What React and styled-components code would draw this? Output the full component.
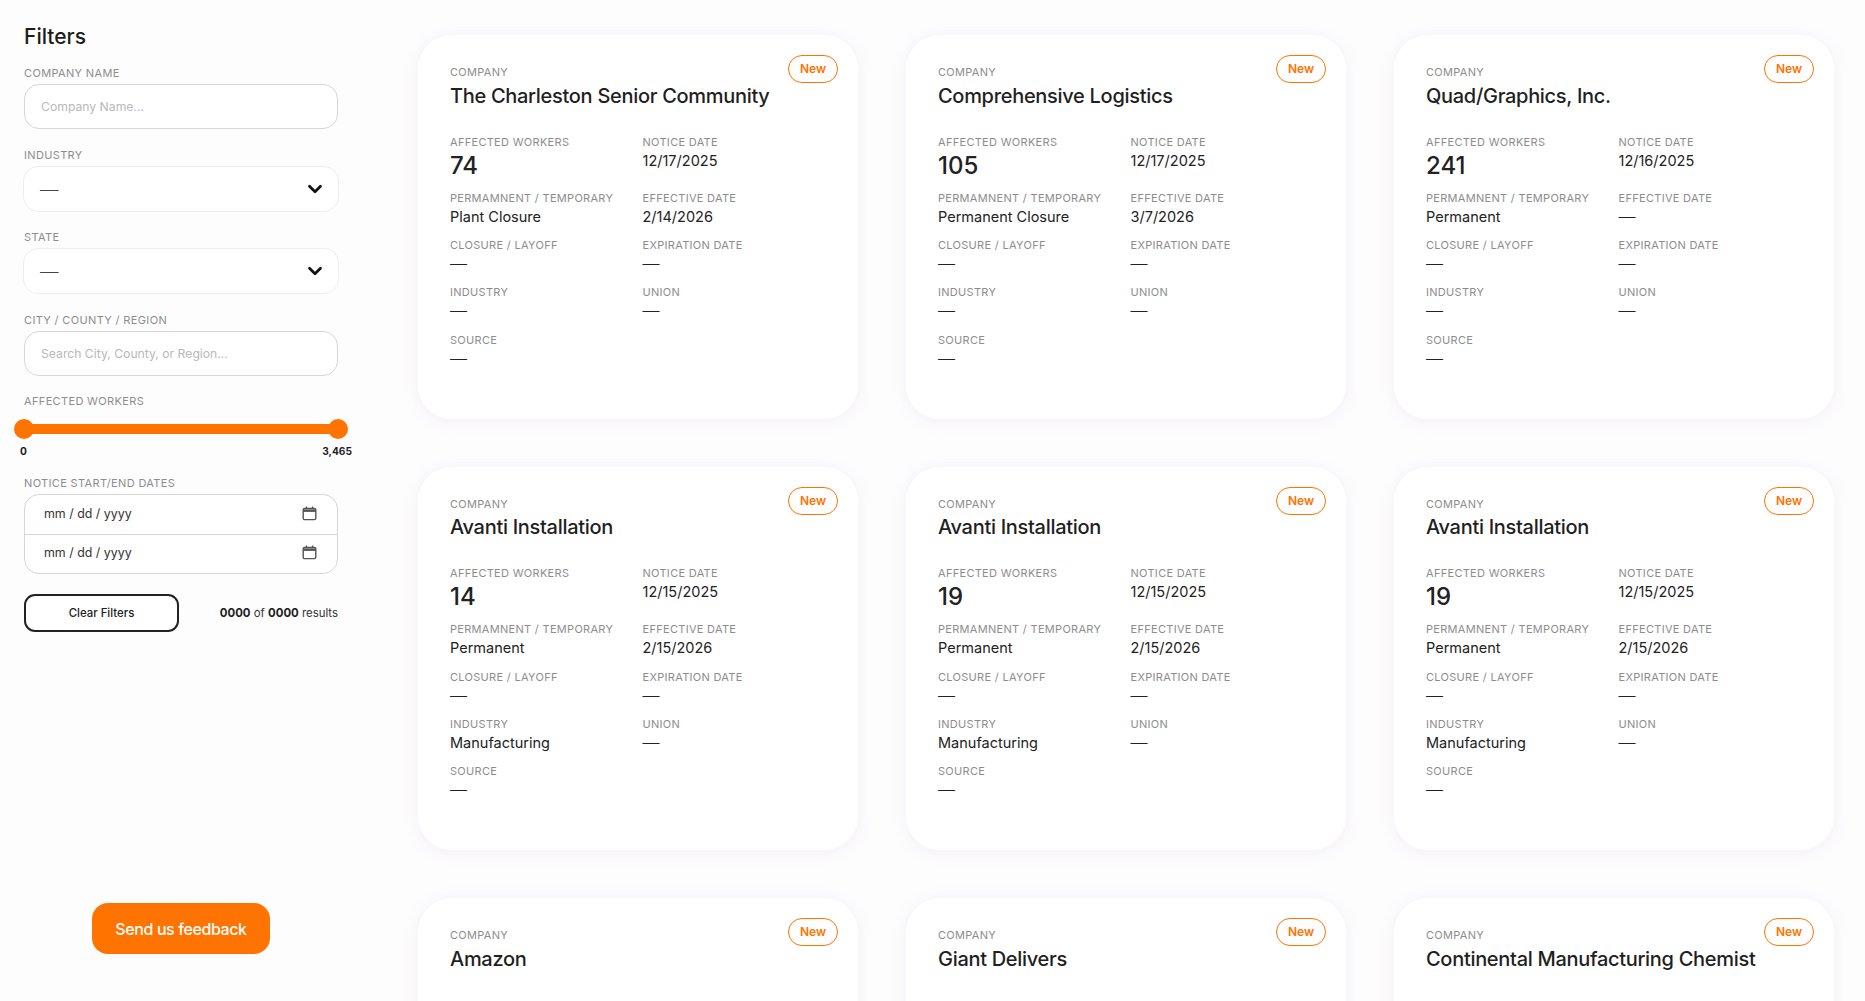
import React from "react";
import styled, { createGlobalStyle } from "styled-components";
import { ChevronDown } from "lucide-react";

const FONT = `Inter, "Noto Sans", sans-serif`;
const ORANGE = "#ff7300";

const jobs = [
  { company: "The Charleston Senior Community", workers: "74", notice: "12/17/2025", type: "Plant Closure", effective: "2/14/2026" },
  { company: "Comprehensive Logistics", workers: "105", notice: "12/17/2025", type: "Permanent Closure", effective: "3/7/2026" },
  { company: "Quad/Graphics, Inc.", workers: "241", notice: "12/16/2025", type: "Permanent" },
  { company: "Avanti Installation", workers: "14", notice: "12/15/2025", type: "Permanent", effective: "2/15/2026", industry: "Manufacturing" },
  { company: "Avanti Installation", workers: "19", notice: "12/15/2025", type: "Permanent", effective: "2/15/2026", industry: "Manufacturing" },
  { company: "Avanti Installation", workers: "19", notice: "12/15/2025", type: "Permanent", effective: "2/15/2026", industry: "Manufacturing" },
  { company: "Amazon" },
  { company: "Giant Delivers" },
  { company: "Continental Manufacturing Chemist" },
];

const GlobalStyle = createGlobalStyle`
  html, body { margin: 0; padding: 0; background: #fefdfe; }
  body { font-family: ${FONT}; color: #222; }
  * { box-sizing: border-box; }
`;

const Page = styled.div`
  display: flex;
  height: 100vh;
  overflow: hidden;
`;

const Sidebar = styled.aside`
  flex: 0 0 418px;
  display: flex;
  flex-direction: column;
  padding: 22px 80px 47px 24px;
`;

const Heading = styled.h2`
  margin: 0 0 13px;
  font-size: 21px;
  line-height: 30px;
  font-weight: 500;
  color: #1c1c1c;
`;

const FilterLabel = styled.label`
  display: block;
  height: 16px;
  margin-bottom: 3px;
  font-size: 11px;
  line-height: 16px;
  letter-spacing: 0.35px;
  text-transform: uppercase;
  color: #8d8d8d;
`;

const FilterGroup = styled.div`
  margin-bottom: ${(p) => p.$gap || "17.5px"};
`;

const TextInput = styled.input`
  display: block;
  width: 100%;
  height: 45px;
  padding: 0 16px;
  border: 1px solid #d6d5d8;
  border-radius: 15px;
  background: #fff;
  font-family: ${FONT};
  font-size: 12.2px;
  outline: none;
  &::placeholder { color: #b9b8bc; }
`;

const SelectBox = styled.div`
  display: flex;
  align-items: center;
  justify-content: space-between;
  height: 46px;
  margin: 0 -1px;
  padding: 0 12px 0 16px;
  border: 1px solid #efedf1;
  border-radius: 15px;
  background: #fff;
  color: #444;
`;

const Dash = styled.span`
  font-size: ${(p) => p.$size || "17px"};
  font-weight: 300;
`;

const SliderTrack = styled.div`
  position: relative;
  height: 10px;
  margin-top: 15px;
  border-radius: 5px;
  background: ${ORANGE};
`;

const SliderThumb = styled.span`
  position: absolute;
  top: -5px;
  ${(p) => (p.$end ? "right: -10px;" : "left: -10px;")}
  width: 20px;
  height: 20px;
  border-radius: 50%;
  background: ${ORANGE};
`;

const SliderValues = styled.div`
  display: flex;
  justify-content: space-between;
  margin: 9px -14px 0 -4px;
  font-size: 10.2px;
  line-height: 16px;
  font-weight: 700;
  color: #1d1d1d;
`;

const DateBox = styled.div`
  margin-top: 1.5px;
  border: 1px solid #d6d5d8;
  border-radius: 15px;
  background: #fff;
`;

const DateRow = styled.div`
  display: flex;
  align-items: center;
  justify-content: space-between;
  height: 39px;
  padding: 0 20px 2px 19px;
  font-size: 12.4px;
  color: #333;
  & + & { border-top: 1px solid #d6d5d8; }
`;

const ActionRow = styled.div`
  display: flex;
  align-items: center;
  justify-content: space-between;
  margin-top: 3px;
`;

const ClearButton = styled.button`
  width: 155px;
  height: 38px;
  border: 2px solid #222;
  border-radius: 11px;
  background: #fff;
  font-family: ${FONT};
  font-size: 11.4px;
  font-weight: 500;
  color: #222;
`;

const Results = styled.div`
  font-size: 11.4px;
  color: #333;
  b { font-weight: 700; color: #1d1d1d; }
`;

const FeedbackButton = styled.button`
  align-self: center;
  width: 178px;
  height: 51px;
  margin-top: auto;
  border: 0;
  border-radius: 16px;
  background: ${ORANGE};
  font-family: ${FONT};
  font-size: 16px;
  font-weight: 500;
  letter-spacing: -0.4px;
  color: #fff;
`;

const CardGrid = styled.main`
  flex: 0 0 auto;
  display: grid;
  grid-template-columns: repeat(3, 440px);
  gap: 48px;
  padding-top: 35px;
  align-content: start;
`;

const Card = styled.article`
  position: relative;
  min-height: 383.5px;
  padding: 29px 32px 40px;
  border-radius: 34px;
  background: #fff;
  box-shadow: 0 2px 14px 4px rgba(110, 80, 150, 0.06);
`;

const Badge = styled.span`
  position: absolute;
  top: 20px;
  right: 20px;
  display: flex;
  align-items: center;
  justify-content: center;
  width: 50px;
  height: 28px;
  padding-bottom: 1px;
  border: 1.5px solid ${ORANGE};
  border-radius: 14px;
  font-size: 12px;
  font-weight: 600;
  color: ${ORANGE};
`;

const FieldLabel = styled.div`
  height: 16px;
  font-size: 11px;
  line-height: 16px;
  letter-spacing: 0.3px;
  text-transform: uppercase;
  white-space: nowrap;
  color: #8d8d8d;
`;

const CompanyName = styled.h3`
  margin: 0.5px 0 23px;
  font-size: 20px;
  line-height: 30px;
  font-weight: 500;
  letter-spacing: -0.3px;
  white-space: nowrap;
  color: #1f1f1f;
`;

const FieldGrid = styled.div`
  display: grid;
  grid-template-columns: 192.5px 1fr;
  row-gap: 9.3px;
`;

const FieldValue = styled.div`
  font-size: ${(p) => (p.$big ? "24px" : "14.5px")};
  line-height: ${(p) => (p.$big ? "32px" : "22px")};
  height: ${(p) => (p.$big ? "31px" : "22px")};
  font-weight: ${(p) => (p.$big ? 500 : 400)};
  color: #222;
`;

const CalendarIcon = () => (
  <svg width="15" height="15" viewBox="0 0 15 15" fill="none" stroke="#555" strokeWidth="1.4">
    <rect x="1.2" y="2.4" width="12.6" height="11.2" rx="1.4" />
    <path d="M1.2 4.6h12.6" strokeWidth="2.6" />
    <path d="M4.4 .6v2.4M10.6 .6v2.4" />
  </svg>
);

const Chevron = styled(ChevronDown).attrs({ size: 22, strokeWidth: 3 })`
  color: #111;
`;

const Field = ({ label, value, big }) => (
  <div>
    <FieldLabel>{label}</FieldLabel>
    <FieldValue $big={big}>{value || <Dash>—</Dash>}</FieldValue>
  </div>
);

const JobCard = ({ job }) => (
  <Card>
    <Badge>New</Badge>
    <FieldLabel>Company</FieldLabel>
    <CompanyName>{job.company}</CompanyName>
    {job.workers && (
      <FieldGrid>
        <Field label="Affected Workers" value={job.workers} big />
        <Field label="Notice Date" value={job.notice} />
        <Field label="Permamnent / Temporary" value={job.type} />
        <Field label="Effective Date" value={job.effective} />
        <Field label="Closure / Layoff" />
        <Field label="Expiration Date" />
        <Field label="Industry" value={job.industry} />
        <Field label="Union" />
        <Field label="Source" />
      </FieldGrid>
    )}
  </Card>
);

export default function App() {
  return (
    <Page>
      <GlobalStyle />
      <Sidebar>
        <Heading>Filters</Heading>
        <FilterGroup>
          <FilterLabel>Company Name</FilterLabel>
          <TextInput placeholder="Company Name..." />
        </FilterGroup>
        <FilterGroup>
          <FilterLabel>Industry</FilterLabel>
          <SelectBox>
            <Dash $size="18.5px">—</Dash>
            <Chevron />
          </SelectBox>
        </FilterGroup>
        <FilterGroup>
          <FilterLabel>State</FilterLabel>
          <SelectBox>
            <Dash $size="18.5px">—</Dash>
            <Chevron />
          </SelectBox>
        </FilterGroup>
        <FilterGroup>
          <FilterLabel>City / County / Region</FilterLabel>
          <TextInput placeholder="Search City, County, or Region..." />
        </FilterGroup>
        <FilterGroup $gap="15.5px">
          <FilterLabel>Affected Workers</FilterLabel>
          <SliderTrack>
            <SliderThumb />
            <SliderThumb $end />
          </SliderTrack>
          <SliderValues>
            <span>0</span>
            <span>3,465</span>
          </SliderValues>
        </FilterGroup>
        <FilterGroup>
          <FilterLabel>Notice Start/End Dates</FilterLabel>
          <DateBox>
            <DateRow>
              mm / dd / yyyy
              <CalendarIcon />
            </DateRow>
            <DateRow>
              mm / dd / yyyy
              <CalendarIcon />
            </DateRow>
          </DateBox>
        </FilterGroup>
        <ActionRow>
          <ClearButton>Clear Filters</ClearButton>
          <Results>
            <b>0000</b> of <b>0000</b> results
          </Results>
        </ActionRow>
        <FeedbackButton>Send us feedback</FeedbackButton>
      </Sidebar>
      <CardGrid>
        {jobs.map((job, i) => (
          <JobCard key={i} job={job} />
        ))}
      </CardGrid>
    </Page>
  );
}
